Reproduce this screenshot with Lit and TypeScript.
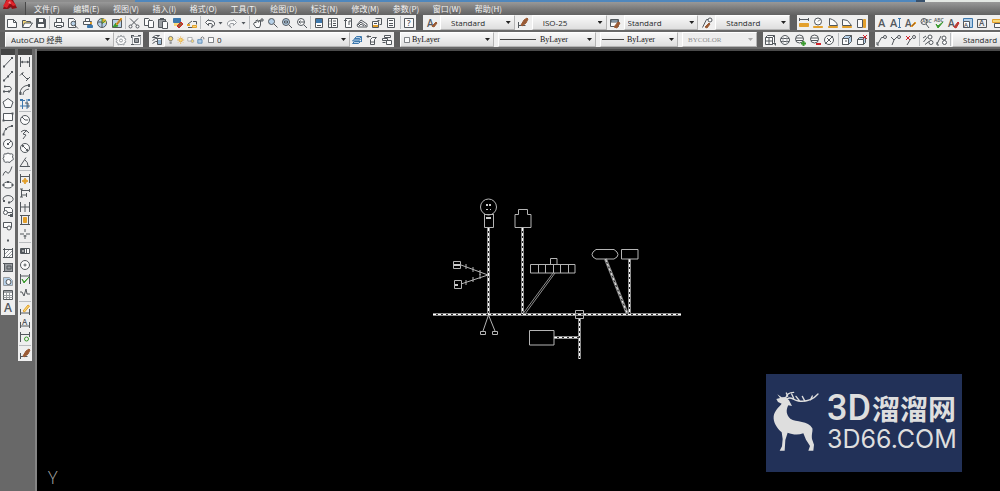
import { LitElement, html, svg, css, nothing } from "lit";
import { customElement, property } from "lit/decorators.js";

const INK: Record<string, string> = {
  k: "#53585d", g: "#999da1", b: "#3d78ad", l: "#b5d0e8", o: "#e3a02c",
  y: "#f7d978", r: "#d0242b", n: "#3a9a2e", w: "#fbfbfb", t: "#9a5a34", "-": "none",
};

/* Each layer is "<stroke><fill> <path>", or "T<colour> x y size text" for a lettered glyph. */
const ICONS: Record<string, string[]> = {
  new: ["kw M2.5 3.5h6l3 3v5h-9z", "k- M8.5 3.5v3h3"],
  open: ["ky M2.5 11V4.5h3l1 1h4V7", "kw M2.5 11.5l2-4.5h8l-3 4.5z"],
  save: ["kk M2.5 2.5h8l1 1v8h-9z", "-w M5 3h4v3H5z", "-w M4 8h6v3H4z"],
  print: ["kw M4.5 6V2.5h5V6", "kw M2.5 6.5h9v4h-9z", "kw M4.5 9.5h5v2h-5z"],
  preview: ["kw M2.5 2.5h5l2 2v7h-7z", "kl M5 7.5a2.3 2.3 0 1 0 4.6 0a2.3 2.3 0 1 0-4.6 0", "k- M9 9.5l3 3"],
  plot: ["kw M4.5 5V2.5h4V5", "kw M2.5 5.5h8v3h-8z", "bb M6.5 9.5h5v2h-5z", "-o M9 6h2v2H9z"],
  publish: ["kl M2.5 7a4.5 4.5 0 1 0 9 0a4.5 4.5 0 1 0-9 0", "-y M7 3h4v4H7z", "no M7 2.5v5l4-3", "k- M3 6h4v5"],
  markup: ["kl M2.5 3.5h9v8h-9z", "nn M3 11l3-4 2 3z", "ot M6 8l5-6 1 1-5 6z"],
  cut: ["k- M3 2.5l7 7M11 2.5l-7 7", "kw M2 10.5a1.5 1.5 0 1 0 3 0a1.5 1.5 0 1 0-3 0M9 10.5a1.5 1.5 0 1 0 3 0a1.5 1.5 0 1 0-3 0"],
  copy: ["kw M2.5 2.5h4l1 1v6h-5z", "kw M6.5 4.5h4l1 1v6h-5z"],
  paste: ["kg M2.5 3.5h7v8h-7z", "kw M6.5 5.5h4l1 1v6h-5z", "-k M4 2h4v2H4z"],
  match: ["bb M2.5 2.5h7v4h-7z", "-y M3 7h6v3H3z", "rt M6 10l4-4 2 2-4 4z"],
  block: ["k- M3 11.5h6M8 5.5h3.5v3M3 8l4-3", "oy M7.5 9.5h4v2h-4z", "-o M2 8h3v2H2z"],
  undo: ["kw M5.5 3.5l-3 3 3 3v-2h3q2 1 0 4q5-3 2-6q-1-1-5-1z"],
  redo: ["gw M8.5 3.5l3 3-3 3v-2h-3q-2 1 0 4q-5-3-2-6q1-1 5-1z"],
  drop: ["-k M1.5 6h4l-2 2.5z"],
  pan: ["kw M4 6l1 1V4.5h1V4h1v2h1V4.5h1.5V9l-1 2.5H5L2.5 8z", "k- M11 2v4M9 4h4"],
  zoom: ["kl M2.5 5.5a3 3 0 1 0 6 0a3 3 0 1 0-6 0", "kk M8 8l3.5 3.5"],
  zoomw: ["kl M2.5 6a3.5 3.5 0 1 0 7 0a3.5 3.5 0 1 0-7 0", "k- M4.5 5h3v2h-3z", "kk M9 9l3 3"],
  zoomp: ["kw M2.5 6a3.5 3.5 0 1 0 7 0a3.5 3.5 0 1 0-7 0", "k- M9 9l3 3M4 6h5M5.5 4.5L4 6l1.5 1.5"],
  props: ["kw M3.5 2.5h7v9h-7z", "-b M4 3h6v4H4z", "k- M5 9.5h4"],
  dcenter: ["kw M2.5 2.5h9v9h-9z", "k- M5.5 3v8M7 5h3M7 7.5h3M7 9.5h3M3.5 5h1M3.5 8h1"],
  palette: ["kw M4.5 2.5h6v9h-6z", "k- M3 4.5h3M8 5v4M8 5h2"],
  sheet: ["kw M2 9l4-5 6 4v3H3z", "k- M3 9l3-3 5 4M4 10l2-2 3 2"],
  markset: ["kw M2.5 5.5h6v6h-6z", "k- M5.5 2.5h6v6h-2M4 7.5h3M7.5 4.5h2", "-o M3 9h5v2H3z"],
  calc: ["kw M3.5 2.5h7v9h-7z", "kg M5 4.5h4", "k- M5 7.5h4M5 9.5h4"],
  help: ["kw M2.5 2.5h9v9h-9z", "Tk 5 10 8 ?"],
  textstyle: ["Tk 2 11 10 A", "tt M7 10l4-4 1 1-3 4z"],
  dimstyle: ["k- M2.5 6v6M2.5 9.5h7", "tt M5 9l3-5 3-2 1 1-2 4-4 3z"],
  tablestyle: ["kw M2.5 3.5h8v7h-8z", "kl M3 4h7v2H3z", "tt M6 11l4-5 2 1-3 5z"],
  leaderstyle: ["k- M2.5 11.5l4-8h3", "kw M8 4a2 2 0 1 0 4 0a2 2 0 1 0-4 0", "tt M5 11l4-4 1 1-3 4z"],
  dist: ["k- M2 3.5h10M2.5 2v3M11.5 2v3", "oo M2.5 7.5h9v3h-9z"],
  radius: ["kw M3.5 5.5a3.5 3.5 0 1 0 7 0a3.5 3.5 0 1 0-7 0", "k- M7 5.5l2-2", "oo M2.5 10.5h9v1h-9z"],
  angle: ["kw M3.5 2.5v7h8q-1-5-8-7z", "oo M2.5 10.5h9v1h-9z"],
  area: ["kw M2.5 9.5v-6l5 1 4 5z", "oo M2.5 10.5h9v1h-9z"],
  volume: ["kw M3.5 3.5h5v8h-5z", "oo M9.5 3.5h2v8h-2z"],
  mtext: ["Tk 3 11 11 A"],
  dtext: ["Tk 1 11 11 A", "b- M9 2.5h3M10.5 3v8M9 11.5h3"],
  edittext: ["Tk 1 11 10 A", "ot M7 10l4-4 1 1-4 4z"],
  find: ["kw M3 5.5a3 3 0 1 0 6 0a3 3 0 1 0-6 0", "k- M8 8l3 4", "Tk 4 7 5 ABC"],
  spell: ["Tk 2 6 5 ABC", "nn M4 8l2 2 5-4-5 6z"],
  tstyle: ["Tk 1 11 10 A", "rt M7 11l4-5 1 1-3 5z"],
  scaletext: ["bl M2.5 2.5h9v9h-9z", "kw M2.5 5.5h6v6h-6z", "Tk 3 11 6 A"],
  justify: ["k- M2.5 3.5v8h9v-8z", "Tk 4 10 8 A"],
  convert: ["oy M2.5 3.5h9v3h-9z", "kw M4.5 7.5h7v4h-7z"],
  gear: ["gw M7 2l1 2 2-1 0 2 2 1-1 1.5 1 1.5-2 1 0 2-2-1-1 1-1-1-2 1 0-2-2-1 1-1.5L2 6l2-1 0-2 2 1z", "gw M5.5 7.5a1.5 1.5 0 1 0 3 0a1.5 1.5 0 1 0-3 0"],
  workspace: ["gw M3.5 3.5h8v8h-8z", "kg M5.5 5.5h4v4h-4z", "k- M2 2.5h3M2.5 2v3M9 2.5h3M2 11.5h3"],
  layers: ["kw M2.5 4.5l3-2h4l-3 2zM2.5 7.5l3-2h3M2.5 10.5l3-2h2", "kw M7.5 5.5h4v6h-4z", "b- M8 8h3M8 10h3"],
  bulb: ["ky M3.5 5a3 3 0 1 1 6 0q0 1.5-1.5 3h-3q-1.5-1.5-1.5-3z", "k- M5 10h3M5 11.5h3"],
  sun: ["oy M4 7a2.5 2.5 0 1 0 5 0a2.5 2.5 0 1 0-5 0", "o- M6.5 2v1.5M6.5 10.5v2M1.5 7h2M9.5 7h2M3 3.5l1 1M10 3.5l-1 1M3 10.5l1-1M10 10.5l-1-1"],
  freeze: ["gw M2.5 3.5h6v5h-6z", "gy M7 8.5a2 2 0 1 0 4 0a2 2 0 1 0-4 0"],
  lock: ["bl M2.5 6.5h6v5h-6z", "k- M7 6V4q2-3 4 0v2"],
  swatch: ["kw M3.5 3.5h7v7h-7z"],
  layercur: ["bl M2.5 10.5l2-2h6l-2 2zM2.5 8l2-2h6l-2 2zM4.5 5.5l2-2h5l-2 2z", "b- M11.5 4v5"],
  layerprev: ["k- M2 3.5h4M3.5 2L2 3.5 3.5 5", "kw M5.5 6.5l2-2h4l-2 2v5h-4zM5.5 9h4"],
  layerstate: ["kw M4.5 2.5h6v2h-6zM2.5 5.5h5v2h-5z", "kw M6.5 7.5h5v4h-5z", "k- M2.5 9.5h3"],
  box: ["kw M2.5 4.5l2-2h7v7l-2 2h-7z", "k- M2.5 4.5h7v7M9.5 4.5l2-2M6 4.5v7M2.5 8h7", "-k M10 10h3v3z"],
  globe: ["kw M2.5 7a4.5 4.5 0 1 0 9 0a4.5 4.5 0 1 0-9 0", "k- M3 5.5h8M3 8.5h8", "g- M5 3v8M9 3v8"],
  globeadd: ["kw M2.5 6a4 4 0 1 0 8 0a4 4 0 1 0-8 0", "k- M3 5h7M3 7.5h7", "-n M8 9.500h5v2H8zM9.500 8h2v5h-2z"],
  globesub: ["kw M2.5 6a4 4 0 1 0 8 0a4 4 0 1 0-8 0", "k- M3 5h7M3 7.5h7", "-r M8 10h5v2H8z"],
  nosphere: ["kw M2.5 7a4.5 4.5 0 1 0 9 0a4.5 4.5 0 1 0-9 0", "k- M3 11l8-8M5 5l4 4"],
  cube: ["kl M2.5 5.5l3-3h6v6l-3 3h-6z", "kw M2.5 5.5h6v6h-6z", "k- M8.5 5.5l3-3M5 8h2"],
  cubedel: ["kl M2.5 6.5l2-2h6v5l-2 2h-6z", "kw M2.5 6.5h6v5h-6z", "r- M8 2l4 4M12 2l-4 4"],
  leader: ["k- M2.5 11.5l4-7h2M2 9v3h2", "kw M8.5 4a1.5 1.5 0 1 0 3 0a1.5 1.5 0 1 0-3 0"],
  leaderadd: ["k- M2 4l3 3 3-3M5 7l-2 5", "kw M8.5 4a1.5 1.5 0 1 0 3 0a1.5 1.5 0 1 0-3 0"],
  leaderdel: ["r- M2 3l4 4M6 3L2 7", "k- M3 12l3-5 2-2", "kw M8.5 4a1.5 1.5 0 1 0 3 0a1.5 1.5 0 1 0-3 0"],
  leaderalign: ["k- M2.5 9l4-5M4 11.5l4-3M2 5l3-2", "kw M7 4a2 2 0 1 0 4 0a2 2 0 1 0-4 0M8 9.5a2 2 0 1 0 4 0a2 2 0 1 0-4 0"],
  leadercol: ["k- M2 11l4-8M2 9v3h2", "kw M7 5a2 2 0 1 0 4 0a2 2 0 1 0-4 0M7.5 9.5a2 2 0 1 0 4 0a2 2 0 1 0-4 0"],
  line: ["k- M3 11.5L11 3", "-k M2 10.5h2v2H2zM10 2h2v2h-2z"],
  ray: ["k- M3 11.5L11 3", "-k M2 10.5h2v2H2zM10 2h2v2h-2zM6 6.5h2v2H6z"],
  pline: ["k- M4 4.5h5q3 2 0 5H3", "-k M2 8.5h2v2H2zM7 8.5h2v2H7zM3 3.5h1.5v2H3z"],
  polygon: ["kw M7 2.5l5 3.5-2 5.5H4L2 6z"],
  rect: ["kw M2.5 3.5h9v7h-9z", "-k M1.5 9.5h2v2h-2zM10.5 2.5h2v2h-2z"],
  arc: ["k- M2.5 11.5q1-7 8-8.5", "-k M1.5 10.5h2v2h-2zM4 5h2v2H4zM10 2h2v2h-2z"],
  circle: ["kw M2.5 7a4.5 4.5 0 1 0 9 0a4.5 4.5 0 1 0-9 0", "k- M7 7l3-3", "-k M6 6h2v2H6z"],
  cloud: ["kw M5 3q2-2 4 0q4-1 2.5 3q2 3-1 3.5q-1 3-4 1.5q-4 1-3.5-2q-2-2 0-3q-1-4 2-3z"],
  spline: ["k- M2 11.5q2-6 4-3t5-6"],
  ellipse: ["kw M2.5 7a4.5 3 0 1 0 9 0a4.5 3 0 1 0-9 0", "-k M1.5 6h2v2h-2zM10.500 6h2v2h-2zM6 3h2v2H6z"],
  earc: ["k- M3 9a5 3.5 0 1 1 5 1.5", "-k M2 8h2v2H2zM7 9.5h2v2H7z"],
  insert: ["kw M3.5 2.5h6l2 2v3h-8z", "kw M2.5 7.5a2 2 0 1 0 4 0a2 2 0 1 0-4 0", "k- M7 10.5h4.5V8", "-k M9 9h3v3H9z"],
  block2: ["kw M2.5 3.5h8v5h-8z", "kw M6 9a2 2 0 1 0 4 0a2 2 0 1 0-4 0"],
  point: ["-k M6 6.5h2v2H6z"],
  hatch: ["gw M3.5 3.5h8v8h-8z", "k- M2 3.5h10M2 11.5h10M3.5 2v10M11.5 2v10", "g- M4 8l4-4M5 11l6-6M8 11l3-3"],
  gradient: ["kg M3.5 3.5h8v8h-8z", "k- M2 3.5h10M2 11.5h10M6 6h4v3H6z"],
  region: ["gl M2.5 3.5h6l3 3v5h-9z", "kw M5 8a2.5 2.5 0 1 0 5 0a2.5 2.5 0 1 0-5 0"],
  table: ["kw M2.5 2.5h9v9h-9z", "-g M3 3h8v2H3z", "g- M2.5 7.5h9M2.5 9.5h9M5.5 5v6M8.5 5v6"],
  letter: ["Tk 3 11 12 A"],
  dimlin: ["k- M2.5 2v10M11.5 2v10M3 7h8", "-k M3 7l2-1.5v3zM11 7L9 5.5v3z"],
  dimalign: ["k- M4 5l5 5M2 6.5L5.5 3M8 12l4-4", "-k M3 4h2v2zM9 11V9h2z"],
  dimarc: ["k- M2 11q0-8 9-9M5 12q0-5 6-6", "-k M1.5 9h2v3h-2zM10 1h2v3h-2z"],
  dimord: ["b- M2 3.5h5M4.5 2v10M2 9h10M9 2v10", "k- M7 6h3v5", "-b M2 2h2v2H2zM10 2h2v2h-2z"],
  dimrad: ["kw M2.5 7a4.5 4.5 0 1 0 9 0a4.5 4.5 0 1 0-9 0", "k- M7 7L4 4M7 7h3"],
  dimjog: ["k- M3 5q4-4 8 1M5 12l3-4-3-1 4-4"],
  dimdia: ["kw M2.5 7a4.5 4.5 0 1 0 9 0a4.5 4.5 0 1 0-9 0", "k- M4 4l6 6", "-k M4 4h2.5L4 6.5zM10 10V7.5L7.5 10z"],
  dimang: ["k- M2 11.5h10M2 11.5L8 2.5M7 5q3 2 3 6"],
  qdim: ["k- M2.5 2v9M11.5 2v9M3 4.5h8", "oo M7 6l1 2 2 1-2 1-1 2-1-2-2-1 2-1z"],
  dimbase: ["k- M3.5 3v8M3.5 4.5h8M11.5 3v3M3.5 9h5M8.5 7v4M2 3h3M2 11h3"],
  dimcont: ["k- M2.5 2v10M7 4v8M11.5 2v10M2.5 7h9"],
  dimspace: ["k- M2 2.5h10M2 11.5h10M3.5 2.5v9M10.5 2.5v9", "oo M5.5 4.5h3v5h-3z"],
  dimbreak: ["k- M2 7h4M8 7h4M7 2v3M7 8v4M5.5 9h3"],
  tol: ["kw M2.5 4.5h9v5h-9z", "-k M3 5h4v4H3z", "-w M4.5 6h1v2h-1z", "k- M8.5 5v4"],
  center: ["kw M2.5 7a4.5 4.5 0 1 0 9 0a4.5 4.5 0 1 0-9 0", "k- M7 5.5v3M5.5 7h3"],
  inspect: ["k- M2.5 2v10M11.5 2v10M3 4h8", "nn M4 7l2 3 5-5-5 6z"],
  jogline: ["k- M2 6h2l2 4 2-7 1 5h3"],
  dimedit: ["k- M2.5 6v6M11.5 6v6M3 10h8", "oy M5 8l5-6 1.5 1-5 6z"],
  dimtedit: ["k- M2.5 6v6M11.5 6v6M3 10h8", "Tk 4 9 8 A"],
  dimupdate: ["k- M2.5 2v10M11.5 2v5M3 4.5h8", "n- M6.5 9a2 2 0 1 0 4 0a2 2 0 1 0-4 0"],
};

function icon(name: string, size = 14) {
  return html`<svg width=${size} height=${size} viewBox="0 0 14 14" overflow="visible" aria-hidden="true">
    ${(ICONS[name] ?? []).map((layer) => {
      if (layer[0] === "T") {
        const [, x, y, fs, txt] = layer.split(" ");
        return svg`<text x=${x} y=${y} font-size=${fs} fill=${INK[layer[1]]} font-family="Open Sans, sans-serif" font-weight="600">${txt}</text>`;
      }
      return svg`<path d=${layer.slice(3)} stroke=${INK[layer[0]]} fill=${INK[layer[1]]}></path>`;
    })}
  </svg>`;
}

/* Strip of tool buttons; "|" is a separator and "drop" a narrow flyout arrow. */
@customElement("tool-strip")
export class ToolStrip extends LitElement {
  @property() icons = "";
  @property({ type: Boolean, reflect: true }) vertical = false;

  static styles = css`
    :host { display: flex; align-items: stretch; min-width: 0; min-height: 0; }
    :host([vertical]) { flex-direction: column; }
    .btn {
      flex: 14 1 0; min-width: 0; min-height: 0; padding: 0; border: 0; background: none;
      display: flex; align-items: center; justify-content: center;
    }
    .btn:hover { background: #cfe3f5; }
    .narrow { flex-grow: 8; justify-content: flex-start; overflow: hidden; }
    .sep { flex: none; width: 1px; margin: 1px; background: #b9bcbf; }
    :host([vertical]) .sep { width: auto; height: 1px; }
    svg { flex: none; display: block; }
  `;

  render() {
    return this.icons.split(" ").map((n) =>
      n === "|"
        ? html`<span class="sep"></span>`
        : html`<button class="btn ${n === "drop" ? "narrow" : ""}" aria-label=${n}>${icon(n)}</button>`
    );
  }
}

@customElement("tool-combo")
export class ToolCombo extends LitElement {
  @property() value = "";
  @property() label = "";
  @property() kind = "plain";
  @property({ type: Boolean }) disabled = false;

  static styles = css`
    :host { display: grid; min-width: 0; }
    .combo { display: grid; align-items: center; min-width: 0; }
    select, .lead, .arrow { grid-area: 1 / 1; }
    select {
      appearance: none; width: 100%; height: 100%; margin: 0; padding: 0 12px 0 10px;
      border: 1px solid #b4b4b4; border-top-color: #fff; border-left-color: #fff; border-radius: 0;
      background: linear-gradient(#f8f8f8, #dedede); color: #26282a;
      font: 8px/12px "Open Sans", "Noto Sans CJK SC", sans-serif;
    }
    .snug { padding-left: 3px; }
    .space { padding-left: 5px; }
    .serif { font-family: "Liberation Serif", serif; color: #111; }
    .color { padding-left: 11px; }
    .layer { padding-left: 52px; }
    .linetype { padding-left: 41px; }
    .weight { padding-left: 26px; }
    .off { padding-left: 5px; background: #ededed; color: #8e8e8e; opacity: 1; font-size: 7px; }
    .lead { pointer-events: none; display: flex; align-items: center; padding-left: 2px; z-index: 1; }
    .lead svg { flex: none; width: 10px; height: 10px; }
    .rule { height: 1px; background: #444; width: 36px; }
    .short { width: 22px; }
    .arrow {
      pointer-events: none; justify-self: end; margin-right: 4px; width: 5px; height: 3px;
      background: #222; clip-path: polygon(0 0, 100% 0, 50% 100%); z-index: 1;
    }
    .dim { background: #aaa; }
  `;

  private lead() {
    switch (this.kind) {
      case "layer":
        return html`<span class="lead">${["bulb", "sun", "freeze", "lock", "swatch"].map((n) => icon(n))}</span>`;
      case "color":
        return html`<span class="lead">${icon("swatch")}</span>`;
      case "linetype":
        return html`<span class="lead"><span class="rule"></span></span>`;
      case "weight":
        return html`<span class="lead"><span class="rule short"></span></span>`;
      default:
        return nothing;
    }
  }

  render() {
    const serif = ["color", "linetype", "weight", "off"].includes(this.kind) ? "serif" : "";
    return html`<label class="combo">
      <select class="${serif} ${this.kind}" aria-label=${this.label} ?disabled=${this.disabled}>
        <option>${this.value}</option>
      </select>
      ${this.lead()}
      <span class="arrow ${this.disabled ? "dim" : ""}"></span>
    </label>`;
  }
}

const MENUS = ["文件(F)", "编辑(E)", "视图(V)", "插入(I)", "格式(O)", "工具(T)", "绘图(D)", "标注(N)", "修改(M)", "参数(P)", "窗口(W)", "帮助(H)"];

/* Truss members: grey edges around a dark core with bright dashes. */
const BEAMS = [
  "M433 314.5H681", "M488.5 228V314", "M522.5 228V314", "M629.5 259V314",
  "M579.5 318V359", "M554 337.5H579", "M605.5 259L627 313",
];

@customElement("app-root")
export class AppRoot extends LitElement {
  static styles = css`
    :host {
      display: flex; flex-direction: column; height: 100vh; overflow: hidden;
      background: #686868; font-family: "Open Sans", "Noto Sans CJK SC", sans-serif;
    }
    .desk { flex: none; height: 2px; background: linear-gradient(90deg, #8d8d8d 135px, #4f87bd 135px 91.6%, #38516d 91.6% 92.5%, #e4e8e4 92.5%); }
    .menubar {
      flex: none; display: flex; height: 13px; background: linear-gradient(#999, #767676 60%, #626262);
    }
    .logo { flex: none; width: 26px; display: flex; background: linear-gradient(#888, #626262); border-right: 1px solid #484848; box-sizing: border-box; }
    .logo svg { margin-top: -2px; }
    .menus { display: flex; justify-content: space-between; width: 468px; padding-left: 8px; align-items: center; }
    .menus a {
      color: #f3f3f3; text-decoration: none; white-space: nowrap;
      font: 8px/12px "Noto Sans CJK SC", sans-serif;
    }
    .row { flex: none; display: flex; height: 15px; padding-left: 5px; background: #606060; margin-bottom: 2px; }
    .first { gap: 7px; }
    .second { gap: 6px; }
    .bar { flex: none; display: flex; background: #efefef; }
    .standard { width: 411px; }
    .standard tool-strip, .measure tool-strip, .text tool-strip, .solids tool-strip { flex: 1; }
    .styles { width: 367px; }
    .styles tool-strip { width: 17px; }
    .styles tool-combo { flex: 1; }
    .measure { width: 71px; }
    .text { width: 129px; }
    .space { width: 138px; }
    .space tool-combo { width: 109px; }
    .space tool-strip { flex: 1; }
    .layerbar { width: 245px; }
    .layerbar tool-combo { width: 186px; }
    .one { width: 15px; }
    .three { flex: 1; }
    .objprops { width: 357px; gap: 4px; }
    .w94 { width: 94px; }
    .w98 { width: 98px; }
    .w79 { width: 78px; }
    .w75 { width: 75px; }
    .solids { width: 106px; }
    .leaders tool-strip { width: 77px; }
    .work { flex: 1; display: flex; min-height: 0; }
    .dock { flex: none; width: 37px; box-sizing: border-box; display: flex; align-items: flex-start; gap: 3px; padding-left: 1px; border-right: 2px solid #858585; }
    .tools { width: 14px; background: #efefef; border-top: 6px solid #444; }
    .tools tool-strip { width: 14px; }
    .draw tool-strip { height: 260px; }
    .dims tool-strip { height: 306px; }
    .canvas { flex: 1; min-width: 0; position: relative; overflow: hidden; background: #000; border-top: 2px solid #4a4a4a; }
    .plan { display: block; }
    .ucs { position: absolute; left: 11px; bottom: 3px; color: #a8a8a8; font: 300 18px/22px "Open Sans", sans-serif; }
    .brand {
      position: absolute; right: 38px; bottom: 19px; width: 196px; height: 98px; box-sizing: border-box;
      display: flex; align-items: center; gap: 8px; padding: 0 0 4px 7px; background: #223158; color: #dedede;
    }
    .brand svg { flex: none; }
    .words { display: flex; flex-direction: column; }
    .top { display: flex; align-items: center; height: 36px; }
    .three-d { font: 500 36px/36px Roboto, sans-serif; width: 45px; }
    .cjk { font: bold 28px/34px "Noto Sans CJK SC", sans-serif; }
    .site { font: 25px/26px Inter, sans-serif; }
  `;

  private plan() {
    return html`<svg class="plan" width="963" height="440" viewBox="37 51 963 440" role="img" aria-label="平面图">
      <g fill="none" stroke="#b4b4b4">
        ${BEAMS.map((d) => svg`<path d=${d} stroke="#8e8e8e" stroke-width="3"></path><path d=${d} stroke="#2c2c2c"></path><path d=${d} stroke="#fff" stroke-dasharray="3 2"></path>`)}
        <path d="M553 273L523.5 313M555 273L525 314" stroke="#8f8f8f"></path>
        <circle cx="488.500" cy="207" r="8"></circle>
        <path d="M484.5 214V227.5H493.5V214M485 214.5h8M515 227.5V214.5H518.5V209.5H527.5V214.5H531V227.5Z"></path>
        <path d="M453.5 261.5h7v7h-7zM454.5 280.5h7v8h-7z"></path>
        <path d="M461 265L488 275L461 284M466 264v5M473 267v5M480 270v5M466 280v5M473 277v5M480 274v5M488.5 315L483 331M488.5 315L495 331"></path>
        <path d="M480.5 331.5h5v3h-5zM492.5 331.5h5v3h-5z"></path>
        <path d="M530.5 264.5h44.5v8.5h-44.5zM538.5 264v9M545.5 264v9M553.5 264v9M560.5 264v9M568.5 264v9M550.5 264v-5.5h6.5v5.5"></path>
        <path d="M596 249.5h18l3 2.5q2 2.5 0 5l-3 2h-18l-3-2q-2-2.5 0-5zM621.5 249.5h16.5v9.5h-16.5z"></path>
        <path d="M575.5 310.5h8v8h-8zM529.5 330.5h24.500v14.5h-24.500z"></path>
      </g>
      <path fill="#ccc" d="M486 204h2v2h-2zM489 204h2v2h-2zM486 209h2v1h-2zM490 209h1v1h-1zM486 217h5v2h-5zM454 264h6v2h-6zM455 284h3v2h-3z"></path>
    </svg>`;
  }

  render() {
    return html`
      <div class="desk"></div>
      <nav class="menubar">
        <span class="logo">
          <svg width="20" height="13" viewBox="0 0 20 13" aria-hidden="true">
            <path fill="#8d0f14" d="M3 9L6 0h7l4 8-5 1-1-2-3 2z"></path>
            <path fill="#e0242b" d="M3 6L7 0h4l5 5-3 1-3-3-3 5z"></path>
            <path fill="#f0888a" d="M8 3l2-2 1 3z"></path>
          </svg>
        </span>
        <div class="menus">${MENUS.map((m) => html`<a href="#">${m}</a>`)}</div>
      </nav>
      <div class="row first">
        <div class="bar standard">
          <tool-strip icons="new open save | print preview plot publish markup | cut copy paste match block | undo drop redo drop | pan zoom zoomw zoomp | props dcenter palette sheet markset calc | help"></tool-strip>
        </div>
        <div class="bar styles">
          <tool-strip icons="textstyle"></tool-strip><tool-combo label="文字样式" value="Standard"></tool-combo>
          <tool-strip icons="dimstyle"></tool-strip><tool-combo label="标注样式" value="ISO-25"></tool-combo>
          <tool-strip icons="tablestyle"></tool-strip><tool-combo label="表格样式" kind="snug" value="Standard"></tool-combo>
          <tool-strip icons="leaderstyle"></tool-strip><tool-combo label="引线样式" value="Standard"></tool-combo>
        </div>
        <div class="bar measure"><tool-strip icons="dist radius angle area volume"></tool-strip></div>
        <div class="bar text"><tool-strip icons="mtext dtext edittext find spell tstyle scaletext justify convert"></tool-strip></div>
      </div>
      <div class="row second">
        <div class="bar space">
          <tool-combo label="工作空间" kind="space" value="AutoCAD 经典"></tool-combo>
          <tool-strip icons="gear workspace"></tool-strip>
        </div>
        <div class="bar layerbar">
          <tool-strip class="one" icons="layers"></tool-strip>
          <tool-combo label="图层" kind="layer" value="0"></tool-combo>
          <tool-strip class="three" icons="layercur layerprev layerstate"></tool-strip>
        </div>
        <div class="bar objprops">
          <tool-combo class="w94" label="颜色" kind="color" value="ByLayer"></tool-combo>
          <tool-combo class="w98" label="线型" kind="linetype" value="ByLayer"></tool-combo>
          <tool-combo class="w79" label="线宽" kind="weight" value="ByLayer"></tool-combo>
          <tool-combo class="w75" label="打印样式" kind="off" value="BYCOLOR" disabled></tool-combo>
        </div>
        <div class="bar solids"><tool-strip icons="box globe globeadd globesub nosphere | cube cubedel"></tool-strip></div>
        <div class="bar leaders">
          <tool-strip icons="leader leaderadd leaderdel | leaderalign leadercol |"></tool-strip>
          <tool-combo class="w75" label="多重引线样式" value="Standard"></tool-combo>
        </div>
      </div>
      <div class="work">
        <aside class="dock">
          <div class="tools draw"><tool-strip vertical icons="line ray pline polygon rect arc circle cloud spline ellipse earc insert block2 point hatch gradient region table letter"></tool-strip></div>
          <div class="tools dims"><tool-strip vertical icons="dimlin dimalign dimarc dimord | dimrad dimjog dimdia dimang | qdim dimbase dimcont dimspace dimbreak | tol center inspect jogline | dimedit dimtedit dimupdate | dimstyle"></tool-strip></div>
        </aside>
        <main class="canvas">
          ${this.plan()}
          <span class="ucs">Y</span>
          <div class="brand">
            <svg width="46" height="61" viewBox="36 78 138 183" aria-hidden="true">
              <path fill="#dedede" d="M46 102L57 99L49 88L62 97L74 96L84 106L93 123L82 121C74 136 76 150 88 161C105 172 142 166 154 190C156 199 151 207 153 222L159 239L157 257H142L147 243L135 224L127 205C110 211 95 209 80 203L73 225L71 257H56L63 244L65 222L62 202C48 190 36 172 38 154C40 137 55 125 62 116L51 111Z"></path>
              <path fill="none" stroke="#dedede" stroke-width="4" stroke-linecap="round" d="M74 99C77 88 87 82 98 82M78 102C90 92 97 107 112 108C134 111 155 105 171 87M80 94L76 84M98 100L92 87M116 108L105 94M132 109L124 94M148 105L154 93"></path>
            </svg>
            <div class="words">
              <div class="top"><span class="three-d">3D</span><span class="cjk">溜溜网</span></div>
              <span class="site">3D66.COM</span>
            </div>
          </div>
        </main>
      </div>`;
  }
}
